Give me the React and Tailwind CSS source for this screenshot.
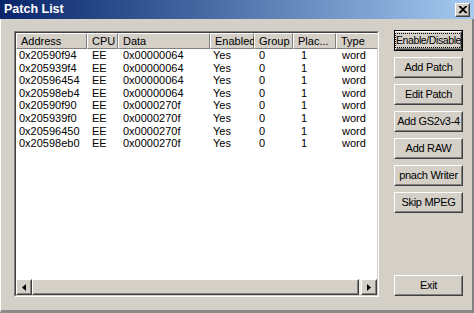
const rows = [
  ["0x20590f94", "EE", "0x00000064"],
  ["0x205939f4", "EE", "0x00000064"],
  ["0x20596454", "EE", "0x00000064"],
  ["0x20598eb4", "EE", "0x00000064"],
  ["0x20590f90", "EE", "0x0000270f"],
  ["0x205939f0", "EE", "0x0000270f"],
  ["0x20596450", "EE", "0x0000270f"],
  ["0x20598eb0", "EE", "0x0000270f"],
];

const headers = ["Address", "CPU", "Data", "Enabled", "Group", "Plac...", "Type"];

function Raised({ className, children }) {
  return (
    <div className={`border border-t-white border-l-white border-b-[#404040] border-r-[#404040] ${className}`}>
      <div className="w-full h-full border border-t-[#d4d0c8] border-l-[#d4d0c8] border-b-[#808080] border-r-[#808080] flex items-center justify-center">
        {children}
      </div>
    </div>
  );
}

function Btn({ children }) {
  return (
    <Raised className="h-[21px] w-[69px] bg-[#d4d0c8]">
      <span className="leading-none whitespace-nowrap tracking-[-0.3px]">{children}</span>
    </Raised>
  );
}

function DefaultBtn({ children }) {
  return (
    <div className="h-[21px] w-[69px] border border-black">
      <Raised className="h-full w-full bg-[#d4d0c8]">
        <span className="leading-[13px] whitespace-nowrap text-[10.5px] tracking-[-0.4px] border border-dotted border-black">{children}</span>
      </Raised>
    </div>
  );
}

export default function App() {
  return (
    <div className="w-[474px] h-[313px] bg-[#d4d0c8] overflow-hidden flex flex-col font-['Liberation_Sans',Arial,sans-serif] text-[11px] text-black">
      <div className="h-[19px] shrink-0 flex items-center justify-between bg-linear-to-r from-[#0a246a] to-[#a6caf0] pl-[4px] pr-[4px]">
        <span className="text-white font-bold text-[12.5px] leading-none">Patch List</span>
        <Raised className="w-[15px] h-[14px] bg-[#d4d0c8]">
          <svg width="9" height="8" viewBox="0 0 9 8">
            <path d="M1 0 L8 7 M2 0 L9 7 M8 0 L1 7 M9 0 L2 7" stroke="#000" strokeWidth="1.1" />
          </svg>
        </Raised>
      </div>
      <div className="flex-1 flex pl-[13px] pt-[12px] border-b-[3px] border-b-[#8a8a8a] border-r-2 border-r-[#808080] border-l border-l-white">
        <div className="w-[365px] h-[266px] border border-t-[#808080] border-l-[#808080] border-b-white border-r-white">
          <div className="w-full h-full border border-t-[#404040] border-l-[#404040] border-b-[#d4d0c8] border-r-[#d4d0c8] bg-white flex flex-col overflow-hidden">
            <div className="flex-1 overflow-hidden">
              <div className="grid grid-cols-[71px_31px_92px_44px_39px_43px_50px] w-max">
                {headers.map((h) => (
                  <div
                    key={h}
                    className="h-[16px] bg-[#d4d0c8] border-t border-l border-t-white border-l-white border-r border-r-[#808080] border-b border-b-[#808080] flex items-center pl-[4px] whitespace-nowrap"
                  >
                    {h}
                  </div>
                ))}
                {rows.map((r) => (
                  <div key={r[0]} className="contents">
                    <div className="h-[12.6px] flex items-center pl-[3px]">{r[0]}</div>
                    <div className="h-[12.6px] flex items-center pl-[5px]">{r[1]}</div>
                    <div className="h-[12.6px] flex items-center pl-[5px]">{r[2]}</div>
                    <div className="h-[12.6px] flex items-center pl-[3px]">Yes</div>
                    <div className="h-[12.6px] flex items-center pl-[5px]">0</div>
                    <div className="h-[12.6px] flex items-center pl-[8px]">1</div>
                    <div className="h-[12.6px] flex items-center pl-[6px]">word</div>
                  </div>
                ))}
              </div>
            </div>
            <div className="h-[16px] shrink-0 flex bg-[#ebe9e5]">
              <Raised className="w-[16px] h-[16px] bg-[#d4d0c8]">
                <svg width="4" height="7" viewBox="0 0 4 7">
                  <path d="M4 0 L0 3.5 L4 7 Z" fill="#000" />
                </svg>
              </Raised>
              <Raised className="w-[327px] h-[16px] bg-[#d4d0c8]" />
              <div className="flex-1" />
              <Raised className="w-[16px] h-[16px] bg-[#d4d0c8]">
                <svg width="4" height="7" viewBox="0 0 4 7">
                  <path d="M0 0 L4 3.5 L0 7 Z" fill="#000" />
                </svg>
              </Raised>
            </div>
          </div>
        </div>
        <div className="ml-[15px] -mt-px h-[266px] w-[69px] flex flex-col gap-[6px]">
          <DefaultBtn>Enable/Disable</DefaultBtn>
          <Btn>Add Patch</Btn>
          <Btn>Edit Patch</Btn>
          <Btn>Add GS2v3-4</Btn>
          <Btn>Add RAW</Btn>
          <Btn>pnach Writer</Btn>
          <Btn>Skip MPEG</Btn>
          <div className="mt-auto">
            <Btn>Exit</Btn>
          </div>
        </div>
      </div>
    </div>
  );
}
